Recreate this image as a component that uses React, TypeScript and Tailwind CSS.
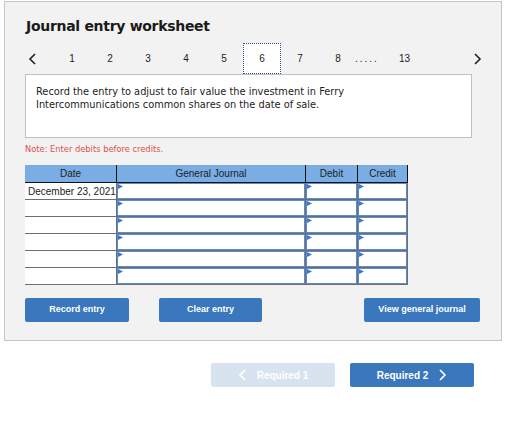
const rows = [
  "December 23, 2021",
  "",
  "",
  "",
  "",
  "",
];

function Flag() {
  return (
    <svg
      className="absolute left-0 top-0"
      width="5"
      height="5"
      viewBox="0 0 5 5"
    >
      <polygon points="0,0 5,2.5 0,5" fill="#3b78c9" />
    </svg>
  );
}

function InputCell() {
  return (
    <div className="h-full border-r border-b border-[#6e6e6e] bg-white">
      <div className="relative h-full border border-[#5b8bd0]">
        <Flag />
      </div>
    </div>
  );
}

function Chevron({ dir, className }: { dir: "left" | "right"; className?: string }) {
  return (
    <svg className={className} width="8" height="12" viewBox="0 0 8 12">
      <polyline
        points={dir === "left" ? "7,1 2,6 7,11" : "1,1 6,6 1,11"}
        fill="none"
        stroke="currentColor"
        strokeWidth="1.6"
      />
    </svg>
  );
}

export default function App() {
  const pages = ["1", "2", "3", "4", "5", "6", "7", "8"];
  return (
    <div className="w-[515px] h-[428px] bg-white pt-px pl-[4px] font-['Liberation_Sans',Arial,sans-serif] text-[#222]">
      <div className="w-[498px] h-[340px] border border-[#c6c6c6] bg-[#f2f2f2]">
        <h1 className="ml-[21px] mt-[14px] h-[20px] text-[14px] leading-[20px] font-bold font-['DejaVu_Sans',Verdana,sans-serif] text-[#1a1a1a] tracking-[-0.3px]">
          Journal entry worksheet
        </h1>

        <div className="mt-[7px] flex h-[31px] items-center pl-[23px] text-[10px] text-[#222]">
          <Chevron dir="left" className="text-[#222]" />
          <div className="w-[17px]" />
          {pages.map((p) =>
            p === "6" ? (
              <div
                key={p}
                className="flex h-full w-[38px] items-center justify-center border border-dotted border-[#2e4f8f] bg-white"
              >
                {p}
              </div>
            ) : (
              <div key={p} className="flex w-[38px] items-center justify-center">
                {p}
              </div>
            )
          )}
          <span className="ml-[-2px] w-[44px] tracking-[2px]">.....</span>
          <span className="w-[14px]">13</span>
          <div className="w-[61px]" />
          <Chevron dir="right" className="text-[#222]" />
        </div>

        <div className="ml-[20px] h-[64px] w-[447px] border border-[#c0c0c0] bg-white px-[10px] pt-[11px] font-['DejaVu_Sans',Verdana,sans-serif] text-[9.8px] leading-[12.5px] text-[#222]">
          Record the entry to adjust to fair value the investment in Ferry
          <br />
          Intercommunications common shares on the date of sale.
        </div>

        <p className="ml-[20px] mt-[6px] font-['DejaVu_Sans',Verdana,sans-serif] text-[8.3px] leading-[10px] text-[#d9534f]">
          Note: Enter debits before credits.
        </p>

        <div className="ml-[20px] mt-[11px] w-[383px]">
          <div className="grid h-[18px] grid-cols-[92px_189px_52px_50px] border-b border-[#111] bg-[#79ade4] text-[10px] text-[#222]">
            <div className="flex items-center justify-center border-r border-[#111]">Date</div>
            <div className="flex items-center justify-center border-r border-[#111]">General Journal</div>
            <div className="flex items-center justify-center border-r border-[#111]">Debit</div>
            <div className="flex items-center justify-center border-r border-[#111]">Credit</div>
          </div>
          {rows.map((d, i) => (
            <div key={i} className="grid h-[17px] grid-cols-[92px_189px_52px_50px]">
              <div className="flex items-center border-r border-b border-[#6e6e6e] bg-white pl-[3px] text-[10px] text-[#222]">
                {d}
              </div>
              <InputCell />
              <InputCell />
              <InputCell />
            </div>
          ))}
        </div>

        <div className="ml-[20px] mt-[13px] flex h-[24px] text-[9px] font-bold text-white">
          <button className="w-[104px] rounded-[2px] bg-[#3a77bc]">Record entry</button>
          <button className="ml-[30px] w-[103px] rounded-[2px] bg-[#3a77bc]">Clear entry</button>
          <button className="ml-[102px] w-[116px] rounded-[2px] bg-[#3a77bc]">View general journal</button>
        </div>
      </div>

      <div className="ml-[207px] mt-[22px] flex h-[24px] text-[10px] font-bold text-white">
        <button className="flex w-[124px] items-center justify-center gap-[11px] rounded-[2px] bg-[#d8e3f0]">
          <Chevron dir="left" />
          <span>Required 1</span>
        </button>
        <button className="ml-[15px] flex w-[124px] items-center justify-center gap-[11px] rounded-[2px] bg-[#3a77bc]">
          <span>Required 2</span>
          <Chevron dir="right" />
        </button>
      </div>
    </div>
  );
}
